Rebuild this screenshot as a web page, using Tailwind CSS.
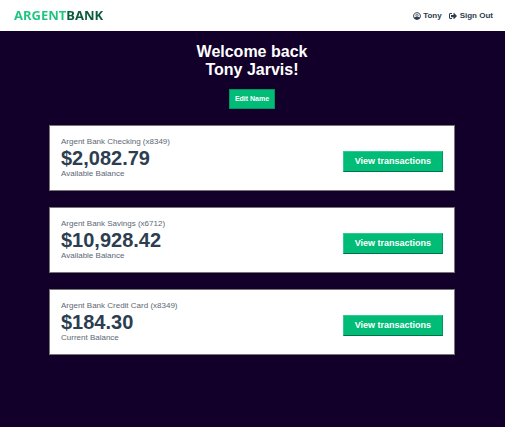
<!DOCTYPE html>
<html lang="en">
<head>
<meta charset="utf-8">
<meta name="viewport" content="width=device-width, initial-scale=1">
<title>Argent Bank - Accounts</title>
<script src="https://cdn.jsdelivr.net/npm/@tailwindcss/browser@4"></script>
</head>
<body class="flex min-h-screen flex-col bg-[#12002b] font-['Liberation_Sans',Arial,sans-serif] text-[#2c3e50]">
<header class="flex h-[31px] items-center justify-between bg-white pr-3 pl-[14px]">
  <a href="#" aria-label="Argent Bank" class="bg-linear-to-r from-[#1fc47f] from-59% to-[#0a5a3c] to-59% bg-clip-text pb-px font-['Noto_Sans',sans-serif] text-[13px] leading-4 font-bold text-transparent">ARGENTBANK</a>
  <nav class="flex items-center gap-[7px] text-[8px] leading-[10px] font-bold">
    <a href="#" class="flex items-center gap-[2px]">
      <svg class="size-2" viewBox="0 0 496 512" fill="currentColor" aria-hidden="true"><path fill-rule="evenodd" d="M248 8C111 8 0 119 0 256s111 248 248 248 248-111 248-248S385 8 248 8zm0 62c102 0 186 84 186 186 0 34-9 66-25 93-24-27-55-43-95-43-16 6-42 10-66 10s-50-4-66-10c-40 0-71 16-95 43-16-27-25-59-25-93 0-102 84-186 186-186z"/><circle cx="248" cy="205" r="75" fill="none" stroke="currentColor" stroke-width="45"/></svg>
      Tony
    </a>
    <a href="#" class="flex items-center gap-[3px]">
      <svg class="size-2" viewBox="0 0 512 512" fill="currentColor" aria-hidden="true"><path d="M497 273L329 441c-15 15-41 4.500-41-17v-96H152c-13.300 0-24-10.700-24-24v-96c0-13.300 10.700-24 24-24h136V88c0-21.400 25.900-32 41-17l168 168c9.300 9.400 9.300 24.600 0 34zM192 436v-40c0-6.600-5.400-12-12-12H96c-17.700 0-32-14.300-32-32V160c0-17.700 14.300-32 32-32h84c6.600 0 12-5.400 12-12V76c0-6.600-5.400-12-12-12H96c-53 0-96 43-96 96v192c0 53 43 96 96 96h84c6.600 0 12-5.400 12-12z"/></svg>
      Sign Out
    </a>
  </nav>
</header>
<main class="flex flex-1 flex-col items-center pt-3 pr-[50px] pl-[49px]">
  <h1 class="text-center text-base leading-[18px] font-bold text-white">Welcome back<br>Tony Jarvis!</h1>
  <button class="mt-[10px] border border-[#00965f] bg-[#00bc77] px-[5px] py-1 text-[7px] leading-[10px] font-bold text-white">Edit Name</button>
  <div class="mt-4 flex w-full flex-col gap-4">
    <section class="flex items-center justify-between border border-[#767676] bg-white p-[11px]">
      <div>
        <h2 class="text-[8px] leading-[10px] text-[#5c6873]">Argent Bank Checking (x8349)</h2>
        <p class="text-xl leading-[22px] font-bold">$2,082.79</p>
        <p class="text-[8px] leading-[10px] text-[#5c6873]">Available Balance</p>
      </div>
      <button class="mt-[7px] border border-[#33c992] border-r-[#00965f] border-b-[#00714a] bg-[#00bc77] px-[11px] py-1 text-[9px] leading-[11px] font-bold text-white">View transactions</button>
    </section>
    <section class="flex items-center justify-between border border-[#767676] bg-white p-[11px]">
      <div>
        <h2 class="text-[8px] leading-[10px] text-[#5c6873]">Argent Bank Savings (x6712)</h2>
        <p class="text-xl leading-[22px] font-bold">$10,928.42</p>
        <p class="text-[8px] leading-[10px] text-[#5c6873]">Available Balance</p>
      </div>
      <button class="mt-[7px] border border-[#33c992] border-r-[#00965f] border-b-[#00714a] bg-[#00bc77] px-[11px] py-1 text-[9px] leading-[11px] font-bold text-white">View transactions</button>
    </section>
    <section class="flex items-center justify-between border border-[#767676] bg-white p-[11px]">
      <div>
        <h2 class="text-[8px] leading-[10px] text-[#5c6873]">Argent Bank Credit Card (x8349)</h2>
        <p class="text-xl leading-[22px] font-bold">$184.30</p>
        <p class="text-[8px] leading-[10px] text-[#5c6873]">Current Balance</p>
      </div>
      <button class="mt-[7px] border border-[#33c992] border-r-[#00965f] border-b-[#00714a] bg-[#00bc77] px-[11px] py-1 text-[9px] leading-[11px] font-bold text-white">View transactions</button>
    </section>
  </div>
</main>
</body>
</html>
